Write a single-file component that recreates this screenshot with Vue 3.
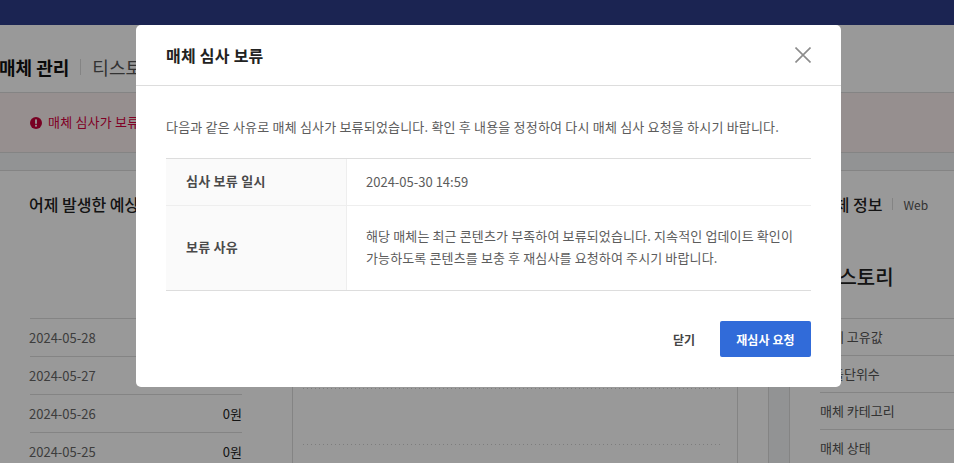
<script setup>
const leftRows = [
  { date: '2024-05-28', value: '' },
  { date: '2024-05-27', value: '' },
  { date: '2024-05-26', value: '0원' },
  { date: '2024-05-25', value: '0원' }
]
const infoRows = ['매체 고유값', '노출단위수', '매체 카테고리', '매체 상태']
</script>

<template>
  <div class="page">
    <header class="topbar"></header>
    <div class="titlebar">
      <strong class="pagetitle">매체 관리</strong>
      <span class="titlediv"></span>
      <span class="sitename">티스토리</span>
    </div>
    <div class="alert">
      <svg class="alerticon" viewBox="0 0 12 12" width="12" height="12">
        <circle cx="6" cy="6" r="6" fill="#c8003a" />
        <rect x="5.1" y="2.4" width="1.8" height="4.4" fill="#fff" />
        <rect x="5.1" y="7.8" width="1.8" height="1.8" fill="#fff" />
      </svg>
      <span>매체 심사가 보류되</span>
    </div>
    <div class="columns">
      <section class="card left">
        <h2 class="cardtitle">어제 발생한 예상</h2>
        <div class="leftrows">
          <div v-for="r in leftRows" :key="r.date" class="leftrow">
            <span class="date">{{ r.date }}</span>
            <span class="won">{{ r.value }}</span>
          </div>
        </div>
      </section>
      <section class="card center">
        <div class="dots"></div>
        <div class="dots"></div>
      </section>
      <div class="gutter"></div>
      <div class="strip"></div>
      <section class="card right">
        <div class="infohead">
          <h2 class="cardtitle">매체 정보</h2>
          <span class="titlediv small"></span>
          <span class="web">Web</span>
        </div>
        <div class="bigname">티스토리</div>
        <div v-for="r in infoRows" :key="r" class="inforow">{{ r }}</div>
      </section>
    </div>

    <div class="overlay">
      <div class="modal">
        <div class="modalhead">
          <h1 class="modaltitle">매체 심사 보류</h1>
          <svg class="close" viewBox="0 0 16 16" width="16" height="16">
            <path d="M0.5 0.5 L15.5 15.5 M15.5 0.5 L0.5 15.5" stroke="#8c8c8c" stroke-width="1.6" fill="none" />
          </svg>
        </div>
        <div class="modalbody">
          <p class="lead">다음과 같은 사유로 매체 심사가 보류되었습니다. 확인 후 내용을 정정하여 다시 매체 심사 요청을 하시기 바랍니다.</p>
          <div class="table">
            <div class="row first">
              <div class="th">심사 보류 일시</div>
              <div class="td date-cell">2024-05-30 14:59</div>
            </div>
            <div class="row">
              <div class="th">보류 사유</div>
              <div class="td multi">해당 매체는 최근 콘텐츠가 부족하여 보류되었습니다. 지속적인 업데이트 확인이<br />가능하도록 콘텐츠를 보충 후 재심사를 요청하여 주시기 바랍니다.</div>
            </div>
          </div>
          <div class="actions">
            <button class="btn plain">닫기</button>
            <button class="btn primary">재심사 요청</button>
          </div>
        </div>
      </div>
    </div>
  </div>
</template>

<style>
html, body { margin: 0; padding: 0; }
</style>

<style scoped>
.page {
  position: relative;
  width: 954px;
  height: 463px;
  overflow: hidden;
  background: #f4f5f7;
  font-family: "Noto Sans CJK KR", "Noto Sans", sans-serif;
  color: #222;
}
.topbar { height: 25px; background: #1b2452; }
.titlebar {
  height: 50px;
  padding-top: 17px;
  display: flex;
  align-items: center;
  background: #fff;
  border-bottom: 1px solid #ddd;
}
.pagetitle { font-size: 18px; font-weight: 700; color: #111; line-height: 26px; margin-left: -1px; }
.titlediv { width: 1px; height: 16px; background: #ddd; margin: 0 11px; }
.sitename { font-size: 18px; color: #555; margin-left: 0; }
.alert {
  height: 59px;
  display: flex;
  align-items: center;
  gap: 6px;
  padding-left: 30px;
  background: #fbeeee;
  border-bottom: 1px solid #ddd;
  font-size: 13px;
  letter-spacing: 0.2px;
  color: #d6003f;
}
.alert span { position: relative; top: -1px; }
.columns {
  margin-top: 17px;
  display: flex;
  height: 293px;
  border-top: 1px solid #ddd;
}
.card { background: #fff; box-sizing: border-box; }
.left { width: 293px; padding: 0 50px 0 30px; border-right: 1px solid #ddd; }
.center { width: 445px; border-right: 1px solid #ddd; padding: 217px 14px 0 10px; }
.gutter { width: 31px; box-sizing: border-box; background: #fff; border-right: 1px solid #ddd; }
.strip { width: 20px; }
.right { flex: 1; border-left: 1px solid #ddd; padding-left: 30px; }
.cardtitle { margin: 0; font-size: 16px; font-weight: 500; color: #222; line-height: 24px; }
.left .cardtitle { padding-top: 21px; margin-left: -1px; }
.leftrows { margin-top: 102px; }
.leftrow {
  height: 36px;
  padding-bottom: 1px;
  border-top: 1px solid #ddd;
  display: flex;
  align-items: center;
  justify-content: space-between;
  font-size: 13px;
}
.date { color: #666; margin-left: -1px; }
.won { color: #222; }
.dots {
  height: 56px;
  background: repeating-linear-gradient(90deg, #d0d0d0 0, #d0d0d0 1px, transparent 1px, transparent 4px) top left / 100% 1px no-repeat;
}
.infohead { display: flex; align-items: center; padding-top: 21px; }
.web { font-size: 12px; color: #555; }
.titlediv.small { height: 12px; margin: 0 10px; }
.bigname { font-size: 20px; font-weight: 500; margin-top: 45px; line-height: 32px; }
.inforow {
  box-sizing: border-box;
  height: 37px;
  line-height: 36px;
  border-top: 1px solid #ddd;
  font-size: 13px;
  color: #555;
}
.bigname + .inforow { margin-top: 25px; }

.overlay {
  position: absolute;
  left: 0;
  right: 0;
  top: 25px;
  bottom: 0;
  padding-left: 136px;
  background: rgba(0, 0, 0, 0.4);
  display: flex;
  justify-content: flex-start;
  align-items: flex-start;
}
.modal {
  width: 705px;
  height: 362px;
  background: #fff;
  border-radius: 5px;
  display: flex;
  flex-direction: column;
}
.modalhead {
  height: 60px;
  padding: 0 30px;
  display: flex;
  align-items: center;
  justify-content: space-between;
  border-bottom: 1px solid #ddd;
}
.modaltitle { margin: 0; font-size: 16px; font-weight: 700; color: #222; letter-spacing: 0.25px; }
.modalbody { padding: 0 30px; flex: 1; }
.lead { margin: 31px 0 0; font-size: 13px; line-height: 20px; letter-spacing: 0.19px; color: #5c5c5c; }
.table { margin-top: 21px; border-top: 1px solid #ddd; border-bottom: 1px solid #ddd; }
.row { display: flex; border-top: 1px solid #eee; }
.row.first { border-top: 0; height: 46px; }
.row:not(.first) { height: 84px; }
.th {
  width: 181px;
  padding: 0 0 3px 20px;
  box-sizing: border-box;
  background: #fafafa;
  border-right: 1px solid #eee;
  display: flex;
  align-items: center;
  font-size: 13px;
  font-weight: 700;
  letter-spacing: 0.25px;
  color: #4a4a4a;
}
.td {
  padding-left: 19px;
  display: flex;
  align-items: center;
  font-size: 13px;
  color: #5c5c5c;
}
.date-cell { padding-bottom: 2px; box-sizing: border-box; }
.td.multi { display: block; padding-top: 19px; line-height: 22px; letter-spacing: 0.13px; }
.actions { display: flex; justify-content: flex-end; margin-top: 30px; }
.btn { height: 36px; border: 0; padding: 0; font-family: inherit; font-size: 12px; font-weight: 700; }
.plain { background: transparent; color: #444; width: 72px; }
.primary { background: #316bd9; color: #fff; width: 91px; border-radius: 2px; letter-spacing: 0.1px; }
</style>
